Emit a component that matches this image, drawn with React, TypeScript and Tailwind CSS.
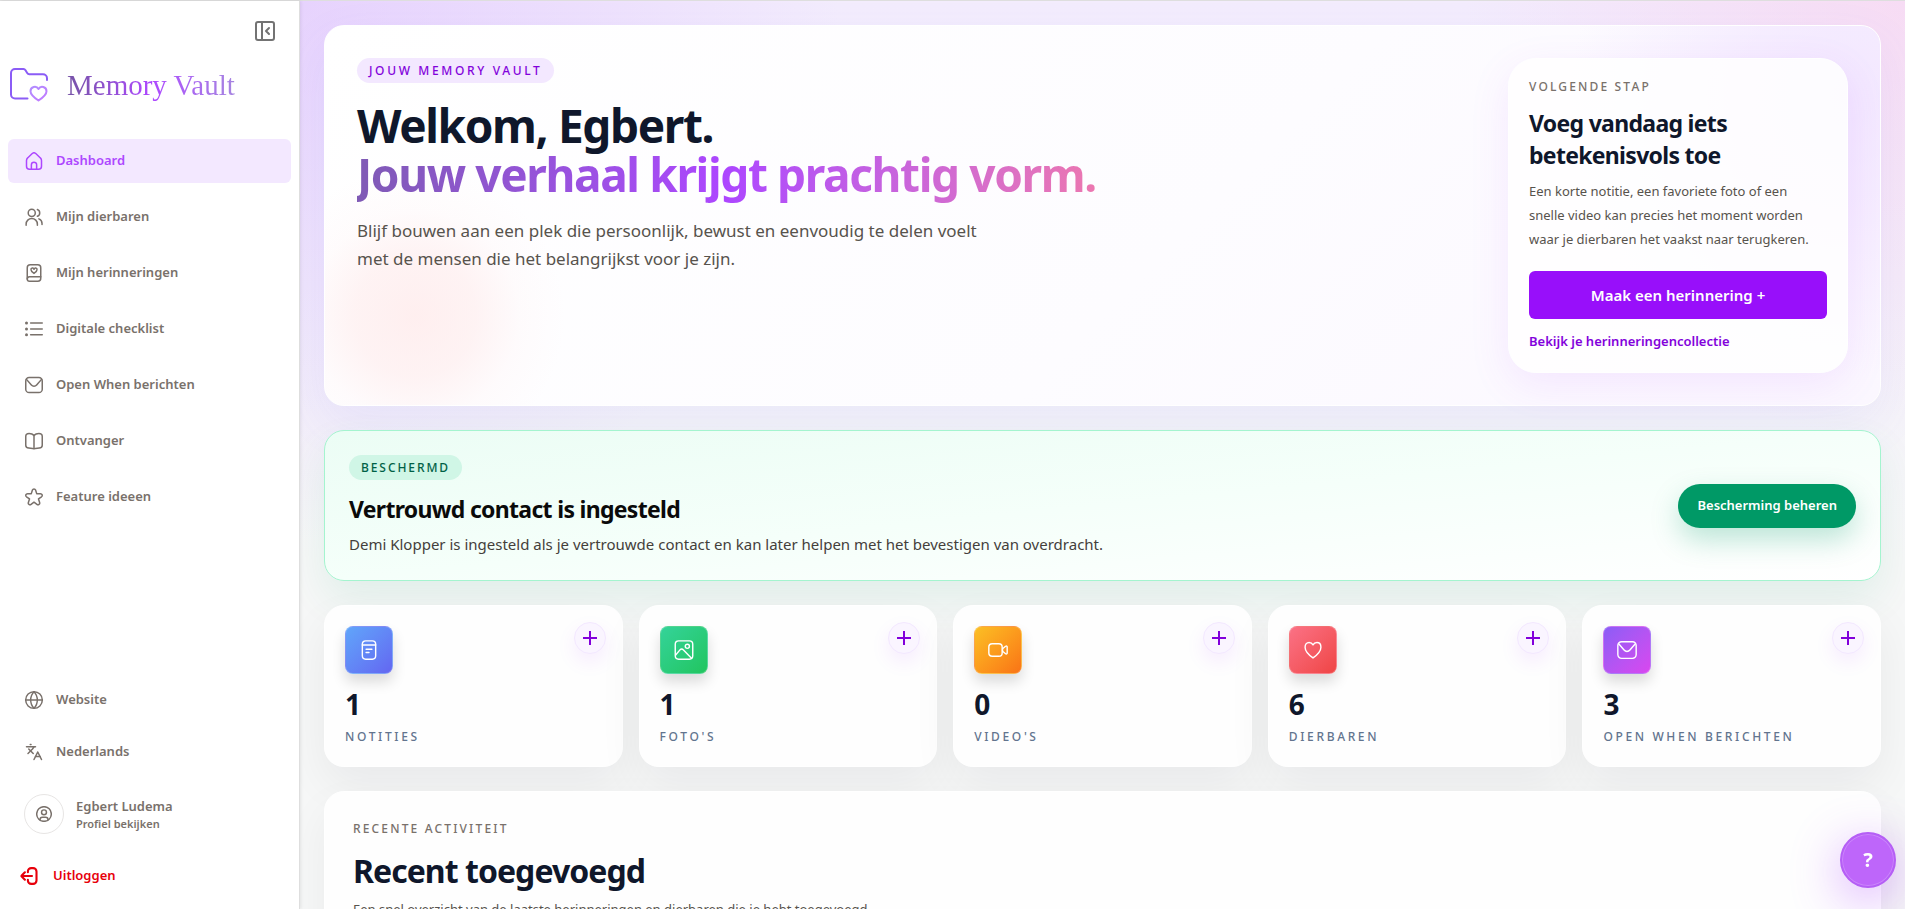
import React from "react";
import { Globe, Languages, PanelLeftClose } from "lucide-react";

type IconProps = { className?: string; strokeWidth?: number };

function Svg({ className = "size-[18px]", strokeWidth = 2, children }: IconProps & { children: React.ReactNode }) {
  return (
    <svg
      viewBox="0 0 24 24"
      className={className}
      fill="none"
      stroke="currentColor"
      strokeWidth={strokeWidth}
      strokeLinecap="round"
      strokeLinejoin="round"
      aria-hidden="true"
    >
      {children}
    </svg>
  );
}

const HomeIcon = (p: IconProps) => (
  <Svg {...p}>
    <path d="M2 11.3c0-1.3.5-2.5 1.5-3.4l5.800-5.600a3.900 3.900 0 0 1 5.400 0l5.800 5.600c1 .9 1.500 2.100 1.500 3.400V19a4 4 0 0 1-4 4H6a4 4 0 0 1-4-4z" />
    <path d="M8.500 22.500V17a3.500 3.500 0 0 1 7 0v5.500" />
  </Svg>
);
const UsersIcon = (p: IconProps) => (
  <Svg {...p}>
    <circle cx="9" cy="6.500" r="4.700" />
    <path d="M1.500 23v-1.500a7.500 7.500 0 0 1 15 0V23" />
    <path d="M16.500 2a4.800 4.800 0 0 1 0 9" />
    <path d="M18.500 14.500c2.600.9 4.200 3.200 4.200 6V22" />
  </Svg>
);
const BookHeartIcon = (p: IconProps) => (
  <Svg {...p}>
    <path d="M7 1h10a4 4 0 0 1 4 4v14a4 4 0 0 1-4 4H6a3 3 0 0 1-3-3V5a4 4 0 0 1 4-4z" />
    <path d="M3 20a3 3 0 0 1 3-3h15" />
    <path d="M12 12.500c-2.500-1.500-4-3-4-4.700A2 2 0 0 1 12 7a2 2 0 0 1 4 .8c0 1.700-1.500 3.200-4 4.700z" />
  </Svg>
);
const ListIcon = (p: IconProps) => (
  <Svg {...p}>
    <path d="M7.500 4H23M7.500 12H23M7.500 19.500H23" />
    <g fill="currentColor" stroke="none">
      <circle cx="2" cy="4" r="2" />
      <circle cx="2" cy="12" r="2" />
      <circle cx="2" cy="19.500" r="2" />
    </g>
  </Svg>
);
const MailIcon = (p: IconProps) => (
  <Svg {...p}>
    <rect x="1" y="2" width="22" height="20" rx="4.500" />
    <path d="m2 4.500 6.500 7.600a4.600 4.600 0 0 0 7 0L22 4.500" />
  </Svg>
);
const OpenBookIcon = (p: IconProps) => (
  <Svg {...p}>
    <path d="M12 4.500C10.800 3.200 8.500 2 5.500 2 2.800 2 1 3.500 1 6v11.500C1 20 2.500 21 5 21.300c2.500.3 4.500.9 7 .9s4.500-.6 7-.9c2.500-.3 4-1.300 4-3.800V6c0-2.500-1.800-4-4.500-4-3 0-5.300 1.200-6.500 2.500z" />
    <path d="M12 4.500V22" />
  </Svg>
);
const StarIcon = (p: IconProps) => (
  <Svg {...p}>
    <path d="M9.900 2.800c.7-2.100 3.500-2.100 4.200 0l1.500 4.700h5c2.300 0 3.200 2.800 1.400 4.200l-4 2.900 1.500 4.700c.7 2.100-1.700 3.900-3.600 2.500L12 18.900l-3.900 2.900c-1.900 1.400-4.300-.4-3.600-2.500L6 14.600l-4-2.900C.2 10.300 1.100 7.500 3.400 7.500h5z" />
  </Svg>
);
const ProfileIcon = (p: IconProps) => (
  <Svg {...p}>
    <circle cx="12" cy="12" r="11" />
    <circle cx="12" cy="9.500" r="3.700" />
    <path d="M6 21v-.5c0-2 1.600-3.500 3.500-3.500h5c1.900 0 3.500 1.500 3.500 3.500v.5" />
  </Svg>
);
const LogoutIcon = (p: IconProps) => (
  <Svg {...p}>
    <path d="M10.500 7V6a4.500 4.500 0 0 1 4.500-4.500h2.500A4.500 4.500 0 0 1 22 6v12a4.500 4.500 0 0 1-4.500 4.500H15a4.500 4.500 0 0 1-4.500-4.500v-1" />
    <path d="M16 12H2M6.500 7 2.300 11.200a1.200 1.200 0 0 0 0 1.600L6.500 17" />
  </Svg>
);
const NoteIcon = (p: IconProps) => (
  <Svg {...p}>
    <rect x="4" y="1" width="16" height="22" rx="4" />
    <path d="M4 6h16M8.500 11h7M8.500 15h3.500" />
  </Svg>
);
const PhotoIcon = (p: IconProps) => (
  <Svg {...p}>
    <rect x="1.500" y="1" width="21" height="22" rx="4" />
    <circle cx="16" cy="7.500" r="2.500" />
    <path d="m2 18 5.400-6.400a2.500 2.500 0 0 1 3.700 0L21 22" />
  </Svg>
);
const VideoIcon = (p: IconProps) => (
  <Svg {...p}>
    <rect x="1" y="4.500" width="16" height="15" rx="4" />
    <path d="m17.500 10.500 3.600-3c.8-.7 1.900-.2 1.900.8v7.400c0 1-1.100 1.500-1.900.8l-3.600-3z" />
  </Svg>
);
const HeartIcon = (p: IconProps) => (
  <Svg {...p}>
    <path d="M12 21.500C6.500 17.500 2.500 13.200 2.500 8.600 2.500 5.300 4.500 3 7.300 3 9.300 3 11 4 12 5.800 13 4 14.700 3 16.700 3c2.800 0 4.800 2.300 4.800 5.600 0 4.600-4 8.900-9.500 12.900z" />
  </Svg>
);

function LogoMark() {
  return (
    <svg viewBox="0 0 38 34" className="h-[34px] w-[38px]" fill="none" strokeWidth="2" strokeLinecap="round" strokeLinejoin="round" aria-hidden="true">
      <defs>
        <linearGradient id="mark" x1="0" y1="0" x2="1" y2="1">
          <stop offset="0" stopColor="#b18cff" />
          <stop offset="1" stopColor="#c27aff" />
        </linearGradient>
      </defs>
      <path stroke="#8b5cf6" d="M17.500 30.500H5a4 4 0 0 1-4-4V5a4 4 0 0 1 4-4h8.500c1 0 1.500.5 2 1.300l1.700 2.700c.5.800 1 1.200 2 1.200H33a4 4 0 0 1 4 4V12" />
      <path stroke="url(#mark)" d="M28.500 32.500c-4.500-3-8-5.700-8-9.300a4.300 4.300 0 0 1 8-2.200 4.300 4.300 0 0 1 8 2.200c0 3.600-3.500 6.300-8 9.300z" />
    </svg>
  );
}

const NAV = [
  { label: "Dashboard", Icon: HomeIcon, active: true },
  { label: "Mijn dierbaren", Icon: UsersIcon },
  { label: "Mijn herinneringen", Icon: BookHeartIcon },
  { label: "Digitale checklist", Icon: ListIcon },
  { label: "Open When berichten", Icon: MailIcon },
  { label: "Ontvanger", Icon: OpenBookIcon },
  { label: "Feature ideeen", Icon: StarIcon },
];

const STATS = [
  { value: 1, label: "Notities", Icon: NoteIcon, tile: "from-[#60a5fa] to-[#6366f1]" },
  { value: 1, label: "Foto's", Icon: PhotoIcon, tile: "from-[#34d399] to-[#22c55e]" },
  { value: 0, label: "Video's", Icon: VideoIcon, tile: "from-[#fbbf24] to-[#f97316]" },
  { value: 6, label: "Dierbaren", Icon: HeartIcon, tile: "from-[#fb7185] to-[#ef4444]" },
  { value: 3, label: "Open When berichten", Icon: MailIcon, tile: "from-[#8b5cf6] to-[#d946ef]" },
];

function Sidebar() {
  return (
    <aside className="z-10 flex w-[300px] shrink-0 flex-col border-r border-[#dedede] bg-white px-2 pb-[11px] text-[13px] font-semibold text-stone-500 shadow-[1px_0_3px_rgba(0,0,0,0.08)]">
      <div className="flex justify-end pt-[18px] pr-3.5">
        <button type="button" aria-label="Zijbalk inklappen" className="text-neutral-500">
          <PanelLeftClose className="size-6" strokeWidth={2} />
        </button>
      </div>
      <a href="#home" className="mt-6 flex items-center gap-[19px] pl-0.5">
        <LogoMark />
        <span className="bg-linear-to-r from-[#7653a6] via-[#ad46ff] to-[#a684e0] bg-clip-text font-['Liberation_Serif',serif] text-[29px] leading-9 font-normal text-transparent">
          Memory Vault
        </span>
      </a>
      <nav className="mt-9">
        <ul className="flex flex-col gap-3">
          {NAV.map(({ label, Icon, active }) => (
            <li key={label}>
              <a
                href={"#" + label}
                className={
                  active
                    ? "flex h-11 items-center gap-3 rounded-md bg-purple-100 px-4 text-purple-500"
                    : "flex h-11 items-center gap-3 rounded-md px-4"
                }
              >
                <span className="flex w-5 justify-center">
                  <Icon />
                </span>
                {label}
              </a>
            </li>
          ))}
        </ul>
      </nav>
      <div className="mt-auto flex flex-col">
        <a href="#website" className="flex h-11 items-center gap-3 px-4">
          <span className="flex w-5 justify-center">
            <Globe className="size-5" strokeWidth={1.75} />
          </span>
          Website
        </a>
        <button type="button" className="mt-2 flex h-11 items-center gap-3 px-4 text-left">
          <span className="flex w-5 justify-center">
            <Languages className="size-[18px]" strokeWidth={2} />
          </span>
          Nederlands
        </button>
        <a href="#profiel" className="mt-3 flex items-center gap-3 px-4 py-2">
          <span className="flex size-10 items-center justify-center rounded-full border border-stone-200">
            <ProfileIcon className="size-4" strokeWidth={2.2} />
          </span>
          <span className="flex flex-col">
            <span className="leading-5">Egbert Ludema</span>
            <span className="text-[11px] leading-4">Profiel bekijken</span>
          </span>
        </a>
        <button type="button" className="mt-3 flex h-11 items-center gap-[15px] px-3 text-left text-[#e7000b]">
          <LogoutIcon className="size-[18px]" strokeWidth={2.8} />
          Uitloggen
        </button>
      </div>
    </aside>
  );
}

function Hero() {
  return (
    <section className="flex items-stretch justify-between gap-8 rounded-[20px] border border-white bg-[radial-gradient(circle_at_90px_290px,rgba(255,226,226,0.550)_0,rgba(255,226,226,0.400)_60px,rgba(255,226,226,0.100)_105px,rgba(255,226,226,0)_150px),radial-gradient(circle_at_calc(100%-30px)_70px,rgba(233,213,255,0.500)_0,rgba(233,213,255,0.350)_110px,rgba(233,213,255,0)_280px),linear-gradient(135deg,#ffffff_0%,#fdfcff_55%,#fbf7ff_100%)] p-8 shadow-[0_18px_50px_rgba(99,102,241,0.08)]">
      <div>
        <span className="flex h-[25px] w-fit items-center rounded-full bg-purple-100 px-3 text-xs font-medium tracking-[0.22em] text-purple-700 uppercase">
          Jouw Memory Vault
        </span>
        <h1 className="mt-[18px] text-[46px] leading-[49px] font-bold tracking-[-0.03em] text-slate-900">
          Welkom, Egbert.
          <span className="-mb-3 block w-fit bg-linear-to-r from-[#7f5ab5] via-[#ad46ff] to-[#ec77b0] bg-clip-text pb-3 text-transparent">
            Jouw verhaal krijgt prachtig vorm.
          </span>
        </h1>
        <p className="mt-[18px] max-w-2xl text-[17px] leading-7 text-stone-600">
          Blijf bouwen aan een plek die persoonlijk, bewust en eenvoudig te delen voelt
          <br />
          met de mensen die het belangrijkst voor je zijn.
        </p>
      </div>
      <aside className="w-[340px] shrink-0 rounded-[28px] border border-white bg-white/85 p-5 shadow-[0_12px_40px_rgba(173,70,255,0.1)]">
        <p className="text-xs leading-4 font-medium tracking-[0.18em] text-stone-500 uppercase">Volgende stap</p>
        <h2 className="mt-3 text-[23px] leading-8 font-bold tracking-[-0.03em] text-slate-900">
          Voeg vandaag iets
          <br />
          betekenisvols toe
        </h2>
        <p className="mt-2 pr-3 text-[13px] leading-6 text-stone-600">
          Een korte notitie, een favoriete foto of een snelle video kan precies het moment worden waar je dierbaren het vaakst naar terugkeren.
        </p>
        <button type="button" className="mt-5 h-12 w-full rounded-md bg-[#980ffa] text-[15px] font-semibold text-white">
          Maak een herinnering +
        </button>
        <a href="#collectie" className="mt-3 block text-[13px] leading-[21px] font-semibold text-purple-700">
          Bekijk je herinneringencollectie
        </a>
      </aside>
    </section>
  );
}

function Protection() {
  return (
    <section className="flex items-center justify-between gap-8 rounded-[20px] border border-[#a4f4cf] bg-linear-to-br from-emerald-50 via-[#f5fffa] to-white p-6 shadow-[0_18px_40px_rgba(0,153,102,0.09)]">
      <div>
        <span className="flex h-[25px] w-fit items-center rounded-full bg-[#d0f6e6] px-3 text-xs font-medium tracking-[0.16em] text-emerald-800 uppercase">
          Beschermd
        </span>
        <h2 className="mt-[13px] text-[23px] leading-8 font-bold tracking-[-0.03em] text-neutral-950">
          Vertrouwd contact is ingesteld
        </h2>
        <p className="mt-[7px] text-[15px] leading-6 text-stone-700">
          Demi Klopper is ingesteld als je vertrouwde contact en kan later helpen met het bevestigen van overdracht.
        </p>
      </div>
      <button type="button" className="h-11 shrink-0 rounded-full bg-emerald-600 px-[19px] text-[13px] font-semibold text-white shadow-[0_12px_28px_rgba(0,153,102,0.25)]">
        Bescherming beheren
      </button>
    </section>
  );
}

function StatCard({ value, label, Icon, tile }: (typeof STATS)[number]) {
  return (
    <article className="rounded-[20px] border border-white bg-white/90 p-5 shadow-[0_18px_45px_rgba(15,23,42,0.06)]">
      <div className="flex items-start justify-between">
        <span className={"flex size-12 items-center justify-center rounded-lg border border-white/20 bg-linear-to-br text-white shadow-[0_8px_14px_rgba(0,0,0,0.14)] " + tile}>
          <Icon className="size-5" strokeWidth={1.7} />
        </span>
        <button
          type="button"
          aria-label={label + " toevoegen"}
          className="-mt-1 -mr-1 flex size-8 items-center justify-center rounded-full border border-purple-100 bg-purple-50 text-purple-700 shadow-[0_8px_20px_rgba(152,16,250,0.08)]"
        >
          <svg viewBox="0 0 14 14" className="size-3.5" stroke="currentColor" strokeWidth="2" aria-hidden="true">
            <path d="M7 0v14M0 7h14" />
          </svg>
        </button>
      </div>
      <p className="mt-3 text-[28px] leading-9 font-bold text-slate-900">{value}</p>
      <p className="mt-1.5 text-xs leading-[18px] font-medium tracking-[0.22em] text-slate-500 uppercase">{label}</p>
    </article>
  );
}

export default function App() {
  return (
    <div className="flex h-screen border-t border-[#dedede] bg-white font-['Noto_Sans',sans-serif]">
      <Sidebar />
      <main className="flex-1 overflow-y-auto bg-[radial-gradient(circle_at_0_0,rgba(216,180,254,0.450)_0,rgba(216,180,254,0)_540px),radial-gradient(circle_at_100%_0,rgba(251,200,233,0.450)_0,rgba(251,200,233,0)_440px),linear-gradient(180deg,#f3ecfd_0,#f4f1fb_280px,#f6f7f7_560px)] p-6 [scrollbar-width:none]">
        <div className="flex flex-col gap-6">
          <Hero />
          <Protection />
          <section className="grid grid-cols-5 gap-4" aria-label="Overzicht">
            {STATS.map((s) => (
              <StatCard key={s.label} {...s} />
            ))}
          </section>
          <section className="rounded-[20px] border border-white bg-white/90 px-7 pt-7 pb-10 shadow-[0_18px_45px_rgba(15,23,42,0.05)]">
            <p className="text-xs leading-[18px] font-medium tracking-[0.18em] text-stone-500 uppercase">Recente activiteit</p>
            <h2 className="mt-[11px] text-[32px] leading-11 font-bold tracking-[-0.03em] text-slate-900">Recent toegevoegd</h2>
            <p className="mt-1 text-[13px] leading-6 text-stone-600">
              Een snel overzicht van de laatste herinneringen en dierbaren die je hebt toegevoegd.
            </p>
          </section>
        </div>
      </main>
      <button
        type="button"
        aria-label="Help"
        className="fixed right-[9px] bottom-[21px] z-20 flex size-14 items-center justify-center rounded-full border-2 border-[#b55ff5] bg-[#be66fa] text-xl font-bold text-white shadow-[0_12px_50px_rgba(173,70,255,0.45)] inset-ring inset-ring-white/20"
      >
        ?
      </button>
    </div>
  );
}
